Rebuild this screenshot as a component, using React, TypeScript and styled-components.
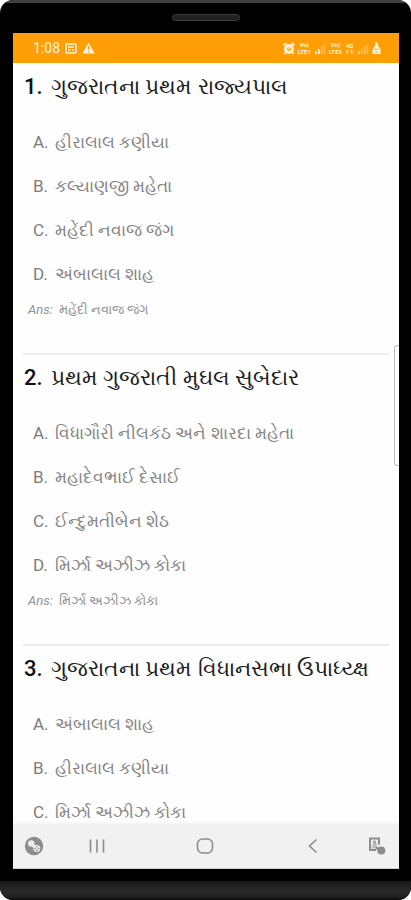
import React from "react";
import styled, { createGlobalStyle } from "styled-components";

const GlobalStyle = createGlobalStyle`
  * { box-sizing: border-box; }
  body { margin: 0; background: #fff; font-family: Roboto, sans-serif; }
`;

const Phone = styled.div`
  height: 100vh;
  display: flex;
  flex-direction: column;
  overflow: hidden;
  border-radius: 13px;
  background: #000;
`;

const TopBezel = styled.div`
  flex: none;
  height: 33px;
  display: flex;
  justify-content: center;
  align-items: center;
  border-top: 3px solid #404040;
`;

const Speaker = styled.div`
  width: 68px;
  height: 7px;
  margin-bottom: 2px;
  border: 1px solid #3c3c3c;
  border-radius: 4px;
  background: #202020;
`;

const Screen = styled.div`
  position: relative;
  flex: 1;
  min-height: 0;
  display: flex;
  flex-direction: column;
  margin: 0 12px 0 13px;
  background: #fefefe;
`;

const StatusBar = styled.header`
  flex: none;
  height: 30px;
  display: flex;
  align-items: center;
  justify-content: space-between;
  padding: 0 18px 0 20px;
  background: #ff9f05;
  color: #fff3dc;
`;

const StatusGroup = styled.div<{ $gap: number }>`
  display: flex;
  align-items: center;
  gap: ${(p) => p.$gap}px;
`;

const Clock = styled.time`
  font-size: 14px;
  line-height: 16px;
`;

const NetworkLabel = styled.span`
  display: flex;
  flex-direction: column;
  align-items: center;
  font-size: 6px;
  font-weight: 700;
  line-height: 7px;
`;

const QuestionList = styled.main`
  flex: 1;
  min-height: 0;
  overflow: hidden;
  padding: 1px 10px 0;
`;

const Question = styled.section`
  height: 291px;
  border-bottom: 2px solid #ebebeb;
`;

const Title = styled.h2`
  display: flex;
  gap: 6px;
  margin: 0;
  padding: 9px 0 19px 1px;
  font-size: 22px;
  font-weight: 400;
  line-height: 28px;
  white-space: nowrap;
  color: #1c1c1c;
`;

const TitleNumber = styled.span`
  min-width: 21px;
  font-weight: 500;
  color: #111;
`;

const Options = styled.ol`
  margin: 0;
  padding: 0 0 0 10px;
  list-style: none;
`;

const Option = styled.li`
  display: flex;
  gap: 5px;
  font-size: 17px;
  line-height: 44px;
  white-space: nowrap;
  color: #858585;
`;

const Letter = styled.span`
  min-width: 17px;
  color: #7c7c7c;
`;

const Answer = styled.p`
  display: flex;
  gap: 6px;
  margin: 4px 0 0 5px;
  font-size: 13px;
  line-height: 20px;
  white-space: nowrap;
  color: #929292;
`;

const EdgeHandle = styled.div`
  position: absolute;
  right: 0;
  top: 312px;
  width: 5px;
  height: 121px;
  border: 1px solid #bdbdbd;
  border-right: 0;
  border-radius: 4px 0 0 4px;
  background: #fff;
`;

const NavBar = styled.nav`
  flex: none;
  height: 45px;
  display: grid;
  grid-template-columns: 42fr 84fr 132fr 84fr 44fr;
  align-items: center;
  background: #f1f1f1;
  border-bottom: 1px solid #d0d0d0;
  box-shadow: 0 -1px 3px #f1f1f1;
  clip-path: inset(-4px 0 0 0);
`;

const NavButton = styled.button`
  display: flex;
  justify-content: center;
  padding: 0;
  border: 0;
  background: none;
  color: #8c8c8c;
`;

const BottomBezel = styled.div`
  flex: none;
  height: 31px;
  background: linear-gradient(#000 0 11px, #1c1c1c 13px, #282828 22px, #202020 28px, #080808);
`;

const NoteIcon = () => (
  <svg width="12" height="11" viewBox="0 0 12 11" fill="none" stroke="currentColor" strokeWidth="1.6">
    <rect x="1" y="1" width="10" height="9" rx="1" />
    <path d="M3 4h6M3 7h2.5M7 7h2" strokeWidth="1.4" />
  </svg>
);

const WarningIcon = () => (
  <svg width="13" height="12" viewBox="0 0 13 12">
    <path d="M6.5 0.5 12.6 11.5H0.4Z" fill="currentColor" />
    <path d="M6.5 4v3.8M6.5 9v1.3" stroke="#ff9f05" strokeWidth="1.2" />
  </svg>
);

const AlarmIcon = () => (
  <svg width="12" height="13" viewBox="0 0 12 13" fill="none" stroke="currentColor">
    <circle cx="6" cy="7" r="3.5" strokeWidth="3" />
    <path d="M0.7 3.2 3.2 1.2M11.3 3.2 8.8 1.2M2.6 10.5 1.4 12M9.4 10.5l1.2 1.5" strokeWidth="1.8" />
    <path d="M6 5v2l1.2.8" />
  </svg>
);

const SignalIcon = ({ strong }: { strong?: boolean }) => (
  <svg width="12" height="11" viewBox="0 0 12 11" stroke="currentColor" strokeWidth="1.8">
    <path d="M2 8.5V11" opacity={strong ? 1 : 0.7} />
    <path d="M4.8 6V11" opacity={strong ? 0.9 : 0.4} />
    <path d="M7.6 3.5V11M10.4 1V11" opacity="0.35" />
  </svg>
);

const DataIcon = () => (
  <svg width="9" height="5" viewBox="0 0 9 5" fill="currentColor" opacity="0.7">
    <path d="M0.5 2.5 2.3 0l1.8 2.5H3V5H1.7V2.5ZM4.9 2.5 6.7 5l1.8-2.5H7.3V0H6v2.5Z" />
  </svg>
);

const BatteryIcon = () => (
  <svg width="9" height="12" viewBox="0 0 9 12">
    <path d="M3 0.5h3v3l2.5 4V12h-8V7.5L3 3.5Z" fill="currentColor" />
    <path d="M2.4 7.2h4.2M3 10h3" stroke="#ff9f05" strokeWidth="0.8" />
  </svg>
);

const GamePadIcon = () => (
  <svg width="20" height="20" viewBox="0 0 20 20">
    <circle cx="10" cy="10" r="9.2" fill="currentColor" />
    <path d="M7.5 8 12.5 12.3" stroke="#ececec" strokeWidth="3.4" />
    <circle cx="7.2" cy="7.4" r="3.2" fill="#ececec" />
    <circle cx="12.8" cy="12.6" r="3.5" fill="#ececec" />
    <g fill="#8c8c8c">
      <circle cx="12.8" cy="10.8" r="0.8" />
      <circle cx="12.8" cy="14.4" r="0.8" />
      <circle cx="11" cy="12.6" r="0.8" />
      <circle cx="14.6" cy="12.6" r="0.8" />
    </g>
  </svg>
);

const RecentsIcon = () => (
  <svg width="16" height="16" viewBox="0 0 16 16" stroke="currentColor" strokeWidth="1.6">
    <path d="M1.5 1.5v13M8 1.5v13M14.5 1.5v13" />
  </svg>
);

const HomeIcon = () => (
  <svg width="18" height="18" viewBox="0 0 18 18" fill="none" stroke="currentColor" strokeWidth="1.6">
    <rect x="1.5" y="2" width="15" height="14" rx="5" />
  </svg>
);

const BackIcon = () => (
  <svg width="10" height="16" viewBox="0 0 10 16" fill="none" stroke="currentColor" strokeWidth="1.6">
    <path d="M8.5 1.5 1.5 8l7 6.5" />
  </svg>
);

const CaptureIcon = () => (
  <svg width="18" height="20" viewBox="0 0 18 20" fill="none">
    <path d="M11 8.5V2.5H2V14h6" stroke="currentColor" strokeWidth="2" />
    <path d="M3.5 12.5 4.5 8.5 7 5.5l2.2 3.5-.8 3.5Z" fill="currentColor" opacity="0.5" />
    <circle cx="6.5" cy="6" r="1.7" fill="currentColor" opacity="0.7" />
    <path d="M8.8 12l4 3" stroke="currentColor" strokeWidth="2.6" strokeLinecap="round" />
    <circle cx="13.3" cy="14.5" r="4" fill="currentColor" />
  </svg>
);

const questions = [
  {
    title: "ગુજરાતના પ્રથમ રાજ્યપાલ",
    options: ["હીરાલાલ કણીયા", "કલ્યાણજી મહેતા", "મહેંદી નવાજ જંગ", "અંબાલાલ શાહ"],
    answer: "મહેંદી નવાજ જંગ",
  },
  {
    title: "પ્રથમ ગુજરાતી મુઘલ સુબેદાર",
    options: ["વિધાગૌરી નીલકંઠ અને શારદા મહેતા", "મહાદેવભાઈ દેસાઈ", "ઈન્દુમતીબેન શેઠ", "મિર્ઝા અઝીઝ કોકા"],
    answer: "મિર્ઝા અઝીઝ કોકા",
  },
  {
    title: "ગુજરાતના પ્રથમ વિધાનસભા ઉપાધ્ય્ક્ષ",
    options: ["અંબાલાલ શાહ", "હીરાલાલ કણીયા", "મિર્ઝા અઝીઝ કોકા"],
  },
];

export default function App() {
  return (
    <Phone>
      <GlobalStyle />
      <TopBezel>
        <Speaker />
      </TopBezel>
      <Screen>
        <StatusBar>
          <StatusGroup $gap={5}>
            <Clock>1:08</Clock>
            <NoteIcon />
            <WarningIcon />
          </StatusGroup>
          <StatusGroup $gap={3}>
            <AlarmIcon />
            <NetworkLabel>
              <span>Vo)</span>
              <span>LTE1</span>
            </NetworkLabel>
            <SignalIcon strong />
            <NetworkLabel>
              <span>Vo)</span>
              <span>LTE2</span>
            </NetworkLabel>
            <NetworkLabel>
              <span>4G</span>
              <DataIcon />
            </NetworkLabel>
            <SignalIcon />
            <BatteryIcon />
          </StatusGroup>
        </StatusBar>
        <QuestionList>
          {questions.map((q, i) => (
            <Question key={q.title}>
              <Title>
                <TitleNumber>{i + 1}.</TitleNumber>
                <span>{q.title}</span>
              </Title>
              <Options>
                {q.options.map((text, n) => (
                  <Option key={text}>
                    <Letter>{"ABCD"[n]}.</Letter>
                    <span>{text}</span>
                  </Option>
                ))}
              </Options>
              {q.answer && (
                <Answer>
                  <em>Ans:</em>
                  <span>{q.answer}</span>
                </Answer>
              )}
            </Question>
          ))}
        </QuestionList>
        <NavBar>
          <NavButton aria-label="Game tools"><GamePadIcon /></NavButton>
          <NavButton aria-label="Recent apps"><RecentsIcon /></NavButton>
          <NavButton aria-label="Home"><HomeIcon /></NavButton>
          <NavButton aria-label="Back"><BackIcon /></NavButton>
          <NavButton aria-label="Screen capture"><CaptureIcon /></NavButton>
        </NavBar>
        <EdgeHandle />
      </Screen>
      <BottomBezel />
    </Phone>
  );
}
